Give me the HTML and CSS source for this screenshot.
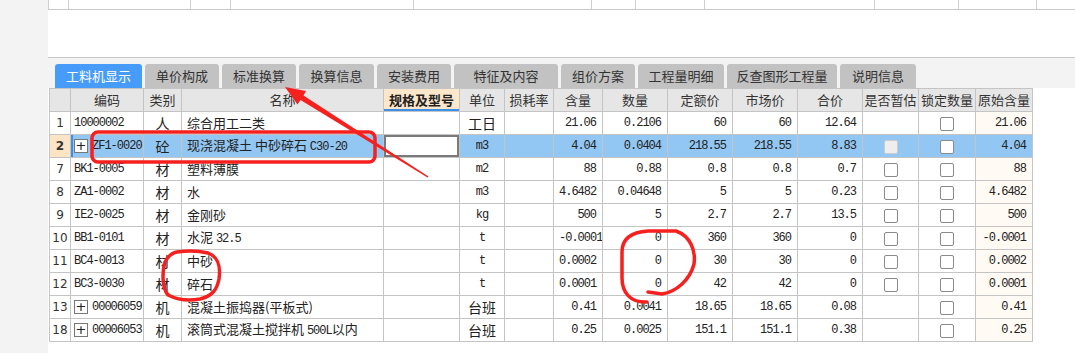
FILE: index.html
```html
<!DOCTYPE html>
<html lang="zh-CN">
<head>
    <meta charset="UTF-8">
    <title>工料机显示</title>
    <link rel="stylesheet" href="styles.css">
</head>
<body>
<div class="page">
    <div class="side"></div>
    <div class="main">
        <div class="top-area">
            <div class="top-grid">
                <span></span><span></span><span></span><span></span><span></span><span></span><span></span><span></span><span></span><span></span><span></span>
            </div>
        </div>
        <div class="tabbar">
            <div class="tab active">工料机显示</div>
            <div class="tab">单价构成</div>
            <div class="tab">标准换算</div>
            <div class="tab">换算信息</div>
            <div class="tab">安装费用</div>
            <div class="tab">特征及内容</div>
            <div class="tab">组价方案</div>
            <div class="tab">工程量明细</div>
            <div class="tab">反查图形工程量</div>
            <div class="tab">说明信息</div>
        </div>
        <table class="grid">
            <colgroup>
                <col style="width:21px"><col style="width:73px"><col style="width:38px"><col style="width:202px">
                <col style="width:76px"><col style="width:45px"><col style="width:49px"><col style="width:49px">
                <col style="width:65px"><col style="width:65px"><col style="width:65px"><col style="width:65px">
                <col style="width:56px"><col style="width:57px"><col style="width:57px">
            </colgroup>
            <thead>
                <tr>
                    <th></th><th>编码</th><th>类别</th><th>名称</th><th class="spec-h">规格及型号</th>
                    <th>单位</th><th>损耗率</th><th>含量</th><th>数量</th><th>定额价</th>
                    <th>市场价</th><th>合价</th><th>是否暂估</th><th>锁定数量</th><th>原始含量</th>
                </tr>
            </thead>
            <tbody>
                <tr>
                    <td class="no">1</td><td class="code">10000002</td><td class="type">人</td><td class="name">综合用工二类</td><td></td>
                    <td class="unit">工日</td><td></td><td class="num">21.06</td><td class="num">0.2106</td><td class="num">60</td>
                    <td class="num">60</td><td class="num">12.64</td><td></td><td class="ck"><span class="chk"></span></td><td class="num orig">21.06</td>
                </tr>
                <tr class="sel">
                    <td class="no">2</td><td class="code"><span class="exp">+</span>ZF1-0020</td><td class="type">砼</td><td class="name">现浇混凝土 中砂碎石 <span class="en">C30-20</span></td><td class="edit"></td>
                    <td class="unit en">m3</td><td></td><td class="num">4.04</td><td class="num">0.0404</td><td class="num">218.55</td>
                    <td class="num">218.55</td><td class="num">8.83</td><td class="ck"><span class="chk off"></span></td><td class="ck"><span class="chk"></span></td><td class="num orig">4.04</td>
                </tr>
                <tr>
                    <td class="no">7</td><td class="code">BK1-0005</td><td class="type">材</td><td class="name">塑料薄膜</td><td></td>
                    <td class="unit en">m2</td><td></td><td class="num">88</td><td class="num">0.88</td><td class="num">0.8</td>
                    <td class="num">0.8</td><td class="num">0.7</td><td class="ck"><span class="chk"></span></td><td class="ck"><span class="chk"></span></td><td class="num orig">88</td>
                </tr>
                <tr>
                    <td class="no">8</td><td class="code">ZA1-0002</td><td class="type">材</td><td class="name">水</td><td></td>
                    <td class="unit en">m3</td><td></td><td class="num">4.6482</td><td class="num">0.04648</td><td class="num">5</td>
                    <td class="num">5</td><td class="num">0.23</td><td class="ck"><span class="chk"></span></td><td class="ck"><span class="chk"></span></td><td class="num orig">4.6482</td>
                </tr>
                <tr>
                    <td class="no">9</td><td class="code">IE2-0025</td><td class="type">材</td><td class="name">金刚砂</td><td></td>
                    <td class="unit en">kg</td><td></td><td class="num">500</td><td class="num">5</td><td class="num">2.7</td>
                    <td class="num">2.7</td><td class="num">13.5</td><td class="ck"><span class="chk"></span></td><td class="ck"><span class="chk"></span></td><td class="num orig">500</td>
                </tr>
                <tr>
                    <td class="no">10</td><td class="code">BB1-0101</td><td class="type">材</td><td class="name">水泥 <span class="en">32.5</span></td><td></td>
                    <td class="unit en">t</td><td></td><td class="num">-0.0001</td><td class="num">0</td><td class="num">360</td>
                    <td class="num">360</td><td class="num">0</td><td class="ck"><span class="chk"></span></td><td class="ck"><span class="chk"></span></td><td class="num orig">-0.0001</td>
                </tr>
                <tr>
                    <td class="no">11</td><td class="code">BC4-0013</td><td class="type">材</td><td class="name">中砂</td><td></td>
                    <td class="unit en">t</td><td></td><td class="num">0.0002</td><td class="num">0</td><td class="num">30</td>
                    <td class="num">30</td><td class="num">0</td><td class="ck"><span class="chk"></span></td><td class="ck"><span class="chk"></span></td><td class="num orig">0.0002</td>
                </tr>
                <tr>
                    <td class="no">12</td><td class="code">BC3-0030</td><td class="type">材</td><td class="name">碎石</td><td></td>
                    <td class="unit en">t</td><td></td><td class="num">0.0001</td><td class="num">0</td><td class="num">42</td>
                    <td class="num">42</td><td class="num">0</td><td class="ck"><span class="chk"></span></td><td class="ck"><span class="chk"></span></td><td class="num orig">0.0001</td>
                </tr>
                <tr>
                    <td class="no">13</td><td class="code"><span class="exp">+</span>00006059</td><td class="type">机</td><td class="name">混凝土振捣器(平板式)</td><td></td>
                    <td class="unit">台班</td><td></td><td class="num">0.41</td><td class="num">0.0041</td><td class="num">18.65</td>
                    <td class="num">18.65</td><td class="num">0.08</td><td></td><td class="ck"><span class="chk"></span></td><td class="num orig">0.41</td>
                </tr>
                <tr>
                    <td class="no">18</td><td class="code"><span class="exp">+</span>00006053</td><td class="type">机</td><td class="name">滚筒式混凝土搅拌机 <span class="en">500L</span>以内</td><td></td>
                    <td class="unit">台班</td><td></td><td class="num">0.25</td><td class="num">0.0025</td><td class="num">151.1</td>
                    <td class="num">151.1</td><td class="num">0.38</td><td></td><td class="ck"><span class="chk"></span></td><td class="num orig">0.25</td>
                </tr>
            </tbody>
        </table>
    </div>
</div>

<!-- red hand-drawn marks on top of the screenshot -->
<svg class="marks" width="1075" height="353" viewBox="0 0 1075 353">
    <rect x="92" y="132" width="283" height="30" rx="6" ry="6" fill="none" stroke="#f5211f" stroke-width="3.5"/>
    <polygon points="285,87 306,91 303.5,95.5 428.5,176.5 427.5,177.5 300.5,100 297.5,104.5" fill="#f5211f"/>
    <path d="M647,302 C630,303 622,292 622,278 L622,252 C622,238 632,232 648,231 L676,231 C690,236 696,250 694,264 C690,280 676,292 662,294 L648,292" fill="none" stroke="#f5211f" stroke-width="3.5" stroke-linecap="round"/>
    <path d="M177,252 C190,250 200,251 208,253 C218,257 221,265 219,279 C217,290 212,296 200,299 C190,301 178,300 168,295 C162,288 162,272 165,262 C168,256 172,253 177,252 Z" fill="none" stroke="#f5211f" stroke-width="3.5"/>
</svg>
</body>
</html>
```

FILE: styles.css
```css
body {
    margin: 0;
    font-family: "Noto Sans CJK SC", "Liberation Sans", sans-serif;
    color: #222;
    background: #fff;
    position: relative;
    width: 1075px;
    height: 353px;
    overflow: hidden;
}
.page {
    display: flex;
    height: 353px;
}
.side {
    width: 48px;
    background: #f3f3f3;
    flex-shrink: 0;
}
.main {
    flex: 1;
    display: flex;
    flex-direction: column;
}
.top-area {
    height: 57px;
    background: #fff;
}
.top-grid {
    display: grid;
    grid-template-columns: 21px 122px 40px 183px 178px 44px 69px 170px 84px 78px 1fr;
    height: 10px;
    border-bottom: 1px solid #c8c8c8;
    box-sizing: border-box;
}
.top-grid span {
    border-right: 1px solid #d0d0d0;
}
.top-grid span:first-child {
    border-left: 1px solid #d0d0d0;
}
.top-grid span:last-child {
    border-right: none;
}
.tabbar {
    height: 31px;
    background: #f3f3f3;
    border-top: 1px solid #c8c8c8;
    box-sizing: border-box;
    display: flex;
    align-items: flex-end;
    gap: 3px;
    padding-left: 7px;
}
.tab {
    height: 24px;
    line-height: 24px;
    background: #c2c2c2;
    color: #333;
    font-size: 13px;
    text-align: center;
    border-radius: 3px 3px 0 0;
}
.tab:nth-child(1) { width: 87px; }
.tab:nth-child(2) { width: 74px; }
.tab:nth-child(3) { width: 74px; }
.tab:nth-child(4) { width: 75px; }
.tab:nth-child(5) { width: 74px; }
.tab:nth-child(6) { width: 104px; }
.tab:nth-child(7) { width: 74px; }
.tab:nth-child(8) { width: 86px; }
.tab:nth-child(9) { width: 110px; }
.tab:nth-child(10) { width: 76px; }
.tab.active {
    background: #479cfa;
    color: #fff;
}
.grid {
    border-collapse: collapse;
    table-layout: fixed;
    width: 984px;
    margin-left: 1px;
    font-size: 13px;
}
.grid th, .grid td {
    border: 1px solid #c4c4c4;
    height: 22px;
    padding: 0 5px;
    white-space: nowrap;
    overflow: hidden;
    line-height: 20px;
}
.grid th {
    background: #e6e6e6;
    font-weight: normal;
    font-size: 13px;
    color: #333;
    text-align: center;
    padding: 0;
}
.grid th.spec-h {
    background: #fde7ca;
    font-weight: bold;
    color: #222;
    box-shadow: inset 0 -2px 0 #3d8fe8;
}
.no {
    text-align: center;
    font-family: "DejaVu Sans", sans-serif;
    font-size: 12px;
    padding: 0 !important;
    color: #333;
}
.code {
    font-family: "Liberation Mono", monospace;
    font-size: 12px;
    letter-spacing: -1px;
    padding-left: 3px !important;
}
.type, .unit {
    text-align: center;
    font-size: 14px;
}
.name {
    font-size: 13px;
}
.en {
    font-family: "Liberation Mono", monospace;
    font-size: 12px;
    letter-spacing: -1px;
}
.unit.en {
    font-size: 12px;
}
.num {
    text-align: right;
    font-family: "Liberation Mono", monospace;
    font-size: 12px;
    letter-spacing: -1px;
    padding-right: 6px !important;
}
.orig {
    background: #fffaf3;
}
.ck {
    text-align: center;
    padding: 0 !important;
}
.chk {
    display: inline-block;
    width: 12px;
    height: 12px;
    border: 1px solid #8a8a8a;
    border-radius: 2px;
    background: #fff;
    vertical-align: middle;
}
.chk.off {
    background: #eeeeee;
    border-color: #cccccc;
}
.exp {
    display: inline-block;
    width: 12px;
    height: 12px;
    border: 1px solid #777;
    line-height: 11px;
    text-align: center;
    font-family: "DejaVu Sans", sans-serif;
    font-size: 13px;
    letter-spacing: 0;
    margin-right: 4px;
    vertical-align: middle;
    background: #fff;
}
.sel td {
    background: #93c7f3;
}
.sel td.no {
    background: #fde4c4;
    font-weight: bold;
}
.sel td.code {
    box-shadow: inset 2px 0 0 #3d8fe8;
}
.sel td.edit {
    background: #fff;
    box-shadow: inset 0 0 0 2px #7a7a7a;
}
.marks {
    position: absolute;
    left: 0;
    top: 0;
    pointer-events: none;
}
```
